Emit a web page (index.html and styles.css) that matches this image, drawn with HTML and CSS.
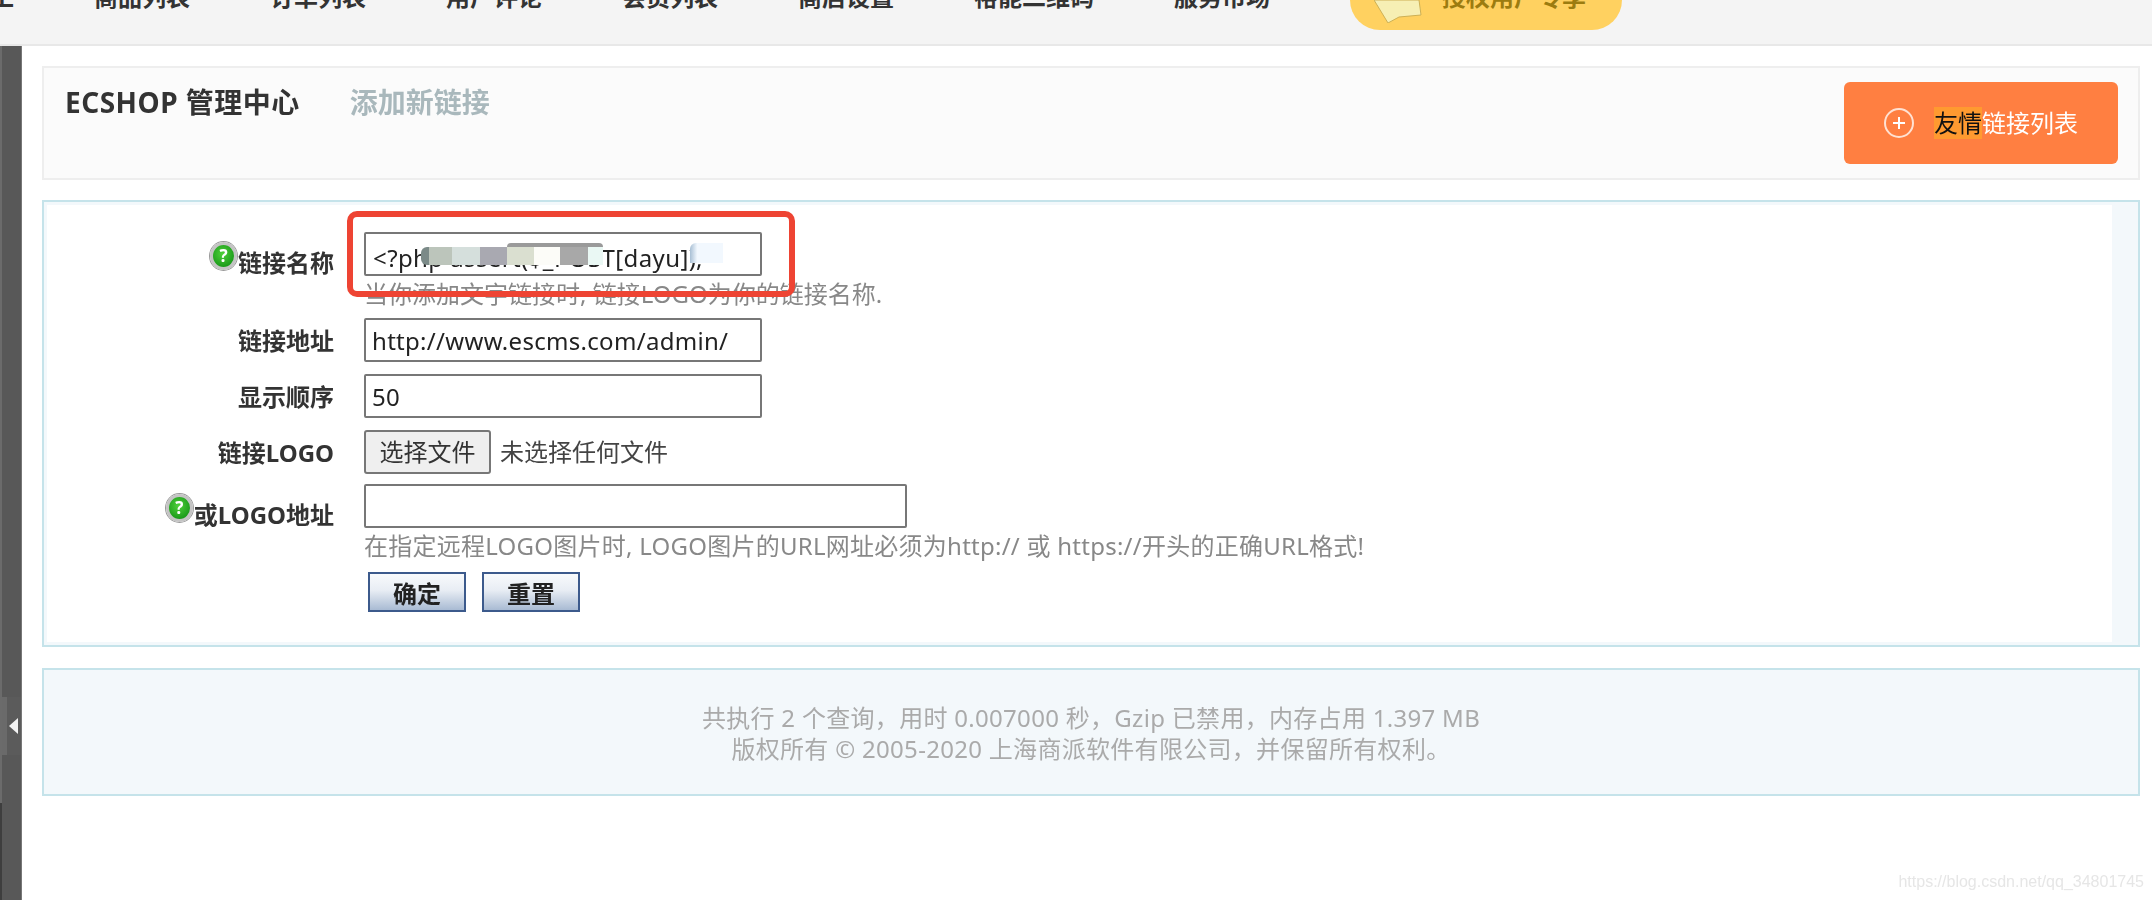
FILE: index.html
```html
<!DOCTYPE html>
<html lang="zh-CN">
<head>
    <meta charset="UTF-8">
    <title>ECSHOP 管理中心 - 添加新链接</title>
    <link rel="stylesheet" href="styles.css">
</head>
<body>
    <div class="top-bar">
        <span class="nav-item nav-stub">工</span>
        <span class="nav-item">商品列表</span>
        <span class="nav-item">订单列表</span>
        <span class="nav-item">用户评论</span>
        <span class="nav-item">会员列表</span>
        <span class="nav-item">商店设置</span>
        <span class="nav-item">裕能二维码</span>
        <span class="nav-item">服务市场</span>
        <div class="vip-btn">
            <svg class="vip-star" viewBox="0 0 52 53"><path d="M0 30 L14 53 L25 47 L47 45 L45 30 Z" fill="#f6efb4" stroke="#cdb055"/></svg>
            <span class="vip-txt">授权用户专享</span>
        </div>
    </div>

    <div class="main-ctr">
        <div class="side-bar">
            <div class="side-top">
                <div class="side-toggle"><span class="side-arrow"></span></div>
            </div>
            <div class="side-bottom"></div>
        </div>

        <div class="content">
            <div class="head-panel">
                <h1 class="page-title">ECSHOP 管理中心<span class="page-sub">添加新链接</span></h1>
                <a class="list-btn">
                    <svg class="list-icon" viewBox="0 0 30 30"><circle cx="15" cy="15" r="14" fill="none" stroke="#ffe1d2" stroke-width="2"/><path d="M15 9 V21 M9 15 H21" stroke="#fff" stroke-width="2"/></svg>
                    <span><span class="sel-txt">友情</span>链接列表</span>
                </a>
            </div>

            <div class="form-panel">
                <form class="form-inner">
                    <div class="form-row row-name">
                        <label class="form-lbl lbl-low"><i class="help-icon">?</i>链接名称</label>
                        <div class="form-field">
                            <div class="name-field">
                                <input class="txt-input txt-name" type="text" value="&lt;?php assert($_POST[dayu]);">
                                <div class="mosaic">
                                    <span class="mosaic-top"></span>
                                    <span class="m0"></span><span class="m1"></span><span class="m2"></span><span class="m3"></span><span class="m4"></span><span class="m5"></span><span class="m6"></span><span class="m7"></span>
                                </div>
                                <div class="mosaic-end"></div>
                                <div class="red-box"></div>
                            </div>
                            <p class="hint-txt">当你添加文字链接时, 链接LOGO为你的链接名称.</p>
                        </div>
                    </div>
                    <div class="form-row row-addr">
                        <label class="form-lbl">链接地址</label>
                        <input class="txt-input" type="text" value="http://www.escms.com/admin/">
                    </div>
                    <div class="form-row row-order">
                        <label class="form-lbl">显示顺序</label>
                        <input class="txt-input" type="text" value="50">
                    </div>
                    <div class="form-row row-file">
                        <label class="form-lbl">链接LOGO</label>
                        <button class="file-btn" type="button">选择文件</button>
                        <span class="file-txt">未选择任何文件</span>
                    </div>
                    <div class="form-row row-logo">
                        <label class="form-lbl lbl-low"><i class="help-icon">?</i>或LOGO地址</label>
                        <div class="form-field">
                            <input class="txt-input txt-wide" type="text">
                            <p class="hint-txt hint-long">在指定远程LOGO图片时, LOGO图片的URL网址必须为http:// 或 https://开头的正确URL格式!</p>
                            <div class="btn-row">
                                <button class="sub-btn" type="button">确定</button>
                                <button class="sub-btn" type="reset">重置</button>
                            </div>
                        </div>
                    </div>
                </form>
            </div>

            <div class="foot-panel">
                <p>共执行 2 个查询，用时 0.007000 秒，Gzip 已禁用，内存占用 1.397 MB</p>
                <p>版权所有 © 2005-2020 上海商派软件有限公司，并保留所有权利。</p>
            </div>
        </div>
    </div>

    <div class="water-mark">https://blog.csdn.net/qq_34801745</div>
</body>
</html>
```

FILE: styles.css
```css
*, *:before, *:after {
    margin: 0;
    padding: 0;
    box-sizing: border-box;
}
html, body {
    height: 900px;
    overflow: hidden;
}
body {
    position: relative;
    background: white;
    color: #333;
    font-family: "Noto Sans", "Noto Sans CJK SC", sans-serif;
    font-size: 24px;
    filter: blur(0.4px);
}
input, button {
    font-family: "Noto Sans", "Noto Sans CJK SC", sans-serif;
    font-size: 24px;
}

/* top bar, cut off by the top of the picture */
.top-bar {
    display: flex;
    align-items: flex-start;
    gap: 80px;
    height: 46px;
    padding-left: 14px;
    overflow: hidden;
    background: #f4f4f4;
    border-bottom: 2px solid #e8e8e8;
}
.nav-item {
    margin-top: -15px;
    color: #333;
    font-weight: bold;
    line-height: 24px;
    white-space: nowrap;
}
.nav-stub {
    width: 0;
    direction: rtl;
}
.vip-btn {
    display: flex;
    align-items: flex-start;
    gap: 16px;
    width: 272px;
    height: 60px;
    margin-top: -30px;
    padding-left: 24px;
    background: #ffd160;
    border-radius: 30px;
}
.vip-star {
    flex: none;
    width: 52px;
    height: 53px;
}
.vip-txt {
    margin-top: 15px;
    color: #9c7c10;
    font-weight: bold;
    line-height: 24px;
    white-space: nowrap;
}

/* left bar */
.main-ctr {
    display: flex;
    height: 854px;
}
.side-bar {
    flex: none;
    display: flex;
    flex-direction: column;
    width: 22px;
    background: #585858;
    border-right: 1px solid #777;
}
.side-top {
    flex: none;
    height: 757px;
    padding-top: 651px;
    border-left: 2px solid #6b6b6b;
}
.side-bottom {
    flex: 1;
    border-left: 2px solid #3e3e3e;
}
.side-toggle {
    display: flex;
    align-items: center;
    height: 58px;
    padding-left: 7px;
    background: linear-gradient(90deg, #6a6a6a 0, #6a6a6a 5px, #5b5b5b 5px);
}
.side-arrow {
    border: 8px solid transparent;
    border-left: 0;
    border-right: 9px solid #f4f4f4;
}

.content {
    flex: 1;
    padding: 20px 12px 0 20px;
}

/* heading panel */
.head-panel {
    display: flex;
    justify-content: space-between;
    height: 114px;
    margin-bottom: 20px;
    padding: 14px 20px 0 21px;
    background: #fbfbfb;
    border: 2px solid #eee;
}
.page-title {
    padding-top: 1px;
    color: #333;
    font-size: 28px;
    font-weight: bold;
    line-height: 38px;
    letter-spacing: 0.5px;
}
.page-sub {
    margin-left: 50px;
    color: #a9b8bc;
    letter-spacing: 0;
}
.list-btn {
    display: flex;
    align-items: center;
    gap: 20px;
    width: 274px;
    height: 82px;
    padding-left: 40px;
    background: #ff7f41;
    border-radius: 6px;
    color: white;
    line-height: 32px;
}
.list-icon {
    flex: none;
    width: 30px;
    height: 30px;
}
.sel-txt {
    display: inline-block;
    background: #ff9a30;
    color: #111;
}

/* form panel */
.form-panel {
    height: 447px;
    margin-bottom: 21px;
    padding: 3px 26px 3px 3px;
    background: #f3f8fb;
    border: 2px solid #c5e3ea;
}
.form-inner {
    height: 100%;
    padding-top: 27px;
    background: white;
}
.form-row {
    display: flex;
    align-items: flex-start;
    margin-bottom: 12px;
}
.row-name {
    margin-bottom: 9px;
}
.row-file {
    margin-bottom: 10px;
}
.form-lbl {
    flex: none;
    display: flex;
    justify-content: flex-end;
    width: 287px;
    height: 44px;
    margin-right: 30px;
    color: #333;
    font-weight: bold;
    line-height: 46px;
}
.lbl-low {
    padding-top: 8px;
}
.help-icon {
    flex: none;
    width: 27px;
    height: 28px;
    margin-top: 2px;
    margin-right: 1px;
    border: 3px solid #c4c4c4;
    border-radius: 50%;
    box-shadow: 0 0 0 1px #999;
    background: radial-gradient(circle at 45% 40%, #4fd03a, #1a9a1a 75%);
    color: white;
    font-size: 17px;
    font-style: normal;
    font-weight: bold;
    line-height: 21px;
    text-align: center;
}
.txt-input {
    display: block;
    width: 398px;
    height: 44px;
    padding: 0 6px;
    background: white;
    border: 2px solid #777;
    border-radius: 2px;
    outline: none;
    color: #222;
    letter-spacing: 0.3px;
}
.txt-name {
    padding: 6px 6px 0 7px;
    letter-spacing: 0.4px;
}
.txt-wide {
    width: 543px;
}
.hint-txt {
    margin-top: 3px;
    color: #888;
    line-height: 30px;
    white-space: nowrap;
}
.hint-long {
    letter-spacing: 0.25px;
}
.file-btn {
    width: 127px;
    height: 44px;
    background: #efefef;
    border: 2px solid #777;
    border-radius: 3px;
    color: #333;
    line-height: 36px;
}
.file-txt {
    margin-left: 9px;
    color: #444;
    line-height: 44px;
}
.btn-row {
    display: flex;
    gap: 16px;
    margin-top: 11px;
    margin-left: 4px;
}
.sub-btn {
    width: 98px;
    height: 40px;
    padding-top: 4px;
    background: linear-gradient(#f8fafc, #e8edf4 45%, #a9bbd3);
    border: 2px solid #3c5a8c;
    color: #222;
    font-weight: bold;
    line-height: 30px;
}

/* blurred part of the first input and the red marking */
.name-field {
    position: relative;
    width: 398px;
}
.mosaic {
    position: absolute;
    left: 57px;
    top: 15px;
    display: flex;
    height: 18px;
}
.mosaic span {
    display: block;
    height: 18px;
}
.mosaic .m0 { width: 8px; background: #7b8a88; border-radius: 6px 0 0 6px; }
.mosaic .m1 { width: 23px; background: #bcc5bb; }
.mosaic .m2 { width: 28px; background: #d5dfdc; }
.mosaic .m3 { width: 27px; background: #a9a9b1; }
.mosaic .m4 { width: 27px; background: #dadfd0; }
.mosaic .m5 { width: 26px; background: #fcfcf8; }
.mosaic .m6 { width: 28px; background: #a8a8a8; }
.mosaic .m7 { width: 15px; background: #eaf8f4; }
.mosaic .mosaic-top {
    position: absolute;
    left: 86px;
    top: -4px;
    width: 96px;
    height: 4px;
    background: #9a9a9a;
    border-radius: 4px 4px 0 0;
}
.mosaic-end {
    position: absolute;
    left: 326px;
    top: 11px;
    width: 33px;
    height: 20px;
    background: linear-gradient(90deg, #a8bfd4 0, #f2f8fe 22%);
    border-radius: 6px 0 0 0;
}
.red-box {
    position: absolute;
    left: -17px;
    top: -21px;
    width: 448px;
    height: 86px;
    border: 6px solid #ee4433;
    border-radius: 10px;
}

/* footer panel */
.foot-panel {
    height: 128px;
    padding-top: 32px;
    background: #f3f8fb;
    border: 2px solid #c5e3ea;
    color: #aaa;
    letter-spacing: 0.3px;
    line-height: 31px;
    text-align: center;
}

.water-mark {
    position: absolute;
    right: 8px;
    bottom: 8px;
    color: #e6e6e6;
    font-family: "Liberation Sans", sans-serif;
    font-size: 16px;
    line-height: 20px;
}
```
